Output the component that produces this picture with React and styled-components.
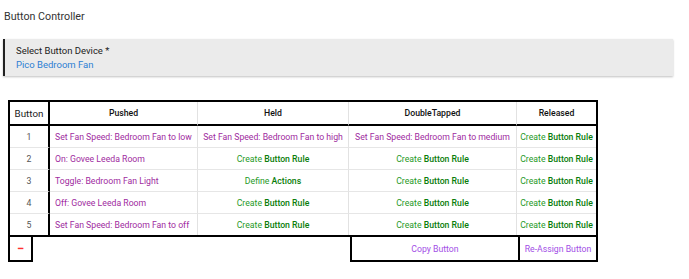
import styled, { createGlobalStyle } from "styled-components";

const Global = createGlobalStyle`
  body {
    margin: 0;
    background: #fff;
    font-family: Roboto, "Liberation Sans", sans-serif;
  }
`;

const Page = styled.div`
  padding: 9px 0 0 0;
`;

const Title = styled.div`
  font-size: 10.7px;
  color: #333;
  padding-left: 4px;
  height: 16px;
  line-height: 16px;
`;

const DeviceBox = styled.div`
  margin: 14px 0 0 3px;
  width: 670px;
  height: 37px;
  box-sizing: border-box;
  background: #ebebeb;
  border-left: 2px solid #222;
  box-shadow: 0 1px 2px rgba(0, 0, 0, 0.25);
  padding: 5px 0 0 11px;
  font-size: 9.5px;
  line-height: 14px;
`;

const Label = styled.div`
  color: #222;
`;

const Value = styled.div`
  color: #2d7fd3;
`;

const Table = styled.div`
  margin: 24px 0 0 8px;
  width: 590px;
  box-sizing: border-box;
  border: 2px solid #000;
  display: grid;
  grid-template-columns: 40px 148px 151px 168px 79px;
  font-size: 8.7px;
`;

const Cell = styled.div`
  box-sizing: border-box;
  height: ${(p) => (p.$head ? 24 : p.$last ? 21 : 22)}px;
  display: flex;
  align-items: center;
  justify-content: ${(p) => (p.$left ? "flex-start" : "center")};
  padding: 0 5px;
  white-space: nowrap;
  border-right: ${(p) =>
    p.$first ? "2px solid #000" : p.$end ? "none" : "1px solid #e2e2e2"};
  border-bottom: ${(p) =>
    p.$head ? "2px solid #000" : p.$last ? "none" : "1px solid #e6e6e6"};
  color: ${(p) => p.$color || "#555"};
`;

const HeadText = styled.span`
  font-weight: 500;
  color: #111;
`;

const ButtonHead = styled.span`
  font-size: 9.8px;
  color: #222;
`;

const Create = styled.span`
  color: #1f9a1f;
  strong {
    color: #0a7d0a;
    font-weight: 500;
  }
`;

const Footer = styled.div`
  margin-left: 8px;
  width: 590px;
  display: flex;
  font-size: 8.7px;
`;

const MinusBox = styled.div`
  width: 25px;
  height: 25px;
  box-sizing: border-box;
  border: 2px solid #000;
  border-top: none;
  display: flex;
  align-items: center;
  justify-content: center;
  color: #ff3030;
  font-size: 13px;
  font-weight: 700;
`;

const Spacer = styled.div`
  flex: 1;
`;

const FootBtn = styled.div`
  width: ${(p) => p.$w}px;
  height: 25px;
  box-sizing: border-box;
  border-left: 2px solid #000;
  border-bottom: 2px solid #000;
  border-right: ${(p) => (p.$end ? "2px solid #000" : "none")};
  display: flex;
  align-items: center;
  justify-content: center;
  white-space: nowrap;
  color: #a24ee6;
`;

const PURPLE = "#a02ba0";

const Rule = ({ word = "Button Rule", lead = "Create" }) => (
  <Create>
    {lead} <strong>{word}</strong>
  </Create>
);

const rows = [
  [
    "Set Fan Speed: Bedroom Fan to low",
    "Set Fan Speed: Bedroom Fan to high",
    "Set Fan Speed: Bedroom Fan to medium",
    null,
  ],
  ["On: Govee Leeda Room", null, null, null],
  ["Toggle: Bedroom Fan Light", "actions", null, null],
  ["Off: Govee Leeda Room", null, null, null],
  ["Set Fan Speed: Bedroom Fan to off", null, null, null],
];

const render = (v) => {
  if (v === null) return <Rule />;
  if (v === "actions") return <Rule lead="Define" word="Actions" />;
  return v;
};

export default function App() {
  return (
    <Page>
      <Global />
      <Title>Button Controller</Title>
      <DeviceBox>
        <Label>Select Button Device *</Label>
        <Value>Pico Bedroom Fan</Value>
      </DeviceBox>
      <Table>
        <Cell $head $first>
          <ButtonHead>Button</ButtonHead>
        </Cell>
        <Cell $head>
          <HeadText>Pushed</HeadText>
        </Cell>
        <Cell $head>
          <HeadText>Held</HeadText>
        </Cell>
        <Cell $head>
          <HeadText>DoubleTapped</HeadText>
        </Cell>
        <Cell $head $end>
          <HeadText>Released</HeadText>
        </Cell>
        {rows.map((r, i) => {
          const last = i === rows.length - 1;
          return [
            <Cell key={`n${i}`} $first $last={last}>
              {i + 1}
            </Cell>,
            ...r.map((v, j) => (
              <Cell
                key={`c${i}-${j}`}
                $last={last}
                $end={j === 3}
                $left={j === 0}
                $color={PURPLE}
              >
                {render(v)}
              </Cell>
            )),
          ];
        })}
      </Table>
      <Footer>
        <MinusBox>−</MinusBox>
        <Spacer />
        <FootBtn $w={168}>Copy Button</FootBtn>
        <FootBtn $w={80} $end>
          Re-Assign Button
        </FootBtn>
      </Footer>
    </Page>
  );
}
